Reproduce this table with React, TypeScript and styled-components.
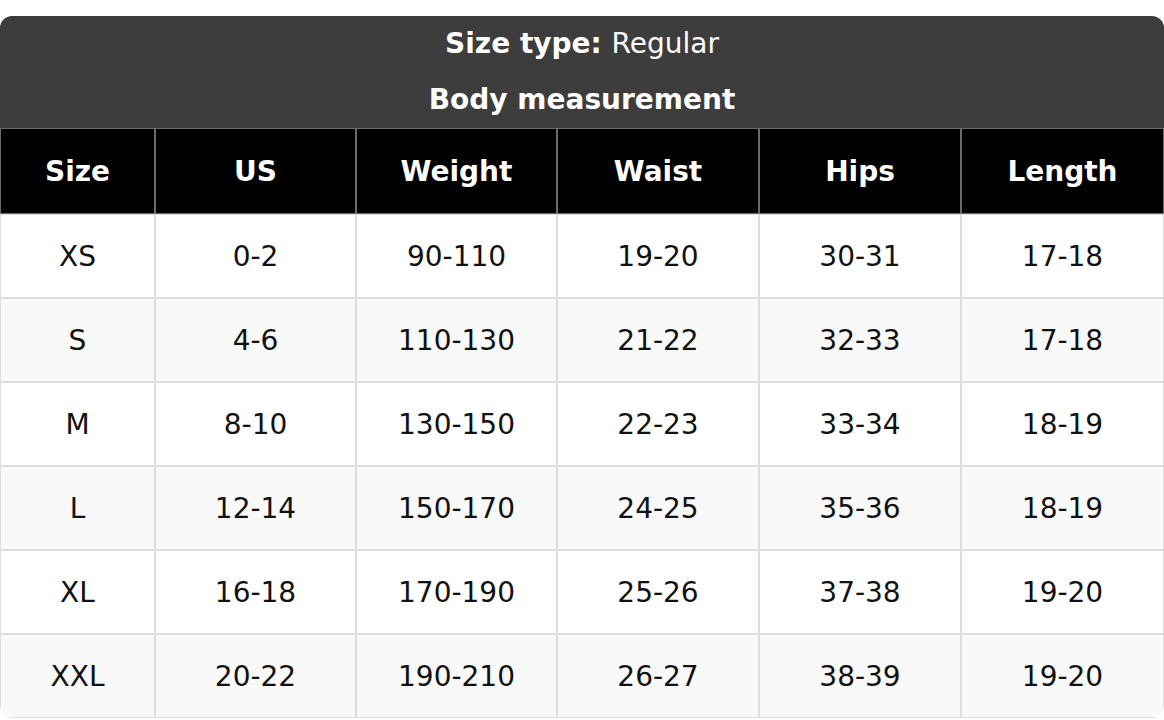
import { createGlobalStyle, styled } from 'styled-components';

const GlobalStyle = createGlobalStyle`
  html, body {
    margin: 0;
    padding: 0;
    background: #ffffff;
    font-family: 'DejaVu Sans', 'Liberation Sans', sans-serif;
  }
`;

const Page = styled.div`
  padding-top: 16px;
`;

const ChartCard = styled.div`
  width: 100%;
  border-radius: 12px;
  overflow: hidden;
  box-sizing: border-box;
`;

const Caption = styled.div`
  background-color: #3d3d3d;
  color: #ffffff;
  text-align: center;
  font-size: 28px;
`;

const CaptionLine = styled.div`
  height: 56px;
  line-height: 56px;
  font-weight: 700;
`;

const Light = styled.span`
  font-weight: 400;
`;

const Grid = styled.div`
  display: grid;
  grid-template-columns: 155px 201px 201px 202px 202px 1fr;
  border-bottom-left-radius: 12px;
  border-bottom-right-radius: 12px;
  overflow: hidden;
`;

interface CellProps {
  $striped?: boolean;
}

const Cell = styled.div<CellProps>`
  height: 84px;
  box-sizing: border-box;
  display: flex;
  align-items: center;
  justify-content: center;
  font-size: 28px;
  color: #111111;
  border: 1px solid #dddddd;
  background-color: ${ ( { $striped } ) => $striped ? '#f9f9f9' : '#ffffff' };
`;

const HeadCell = styled( Cell )`
  height: 86px;
  background-color: #000000;
  color: #ffffff;
  font-weight: 700;
  border-color: #6b6b6b;
`;

const columns = [ 'Size', 'US', 'Weight', 'Waist', 'Hips', 'Length' ];

const rows = [
  [ 'XS', '0-2', '90-110', '19-20', '30-31', '17-18' ],
  [ 'S', '4-6', '110-130', '21-22', '32-33', '17-18' ],
  [ 'M', '8-10', '130-150', '22-23', '33-34', '18-19' ],
  [ 'L', '12-14', '150-170', '24-25', '35-36', '18-19' ],
  [ 'XL', '16-18', '170-190', '25-26', '37-38', '19-20' ],
  [ 'XXL', '20-22', '190-210', '26-27', '38-39', '19-20' ]
];

function App(): JSX.Element {
  return (
    <Page>
      <GlobalStyle />
      <ChartCard>
        <Caption>
          <CaptionLine>
            Size type: <Light>Regular</Light>
          </CaptionLine>
          <CaptionLine>Body measurement</CaptionLine>
        </Caption>

        <Grid>
          { columns.map( ( c ) => <HeadCell key={c}>{c}</HeadCell> ) }
          {
            rows.map( ( row, i ) =>
              row.map( ( value, j ) => (
                <Cell key={`${ i }-${ j }`} $striped={i % 2 === 1}>
                  {value}
                </Cell>
              ) )
            )
          }
        </Grid>
      </ChartCard>
    </Page>
  );
}

export default App;
